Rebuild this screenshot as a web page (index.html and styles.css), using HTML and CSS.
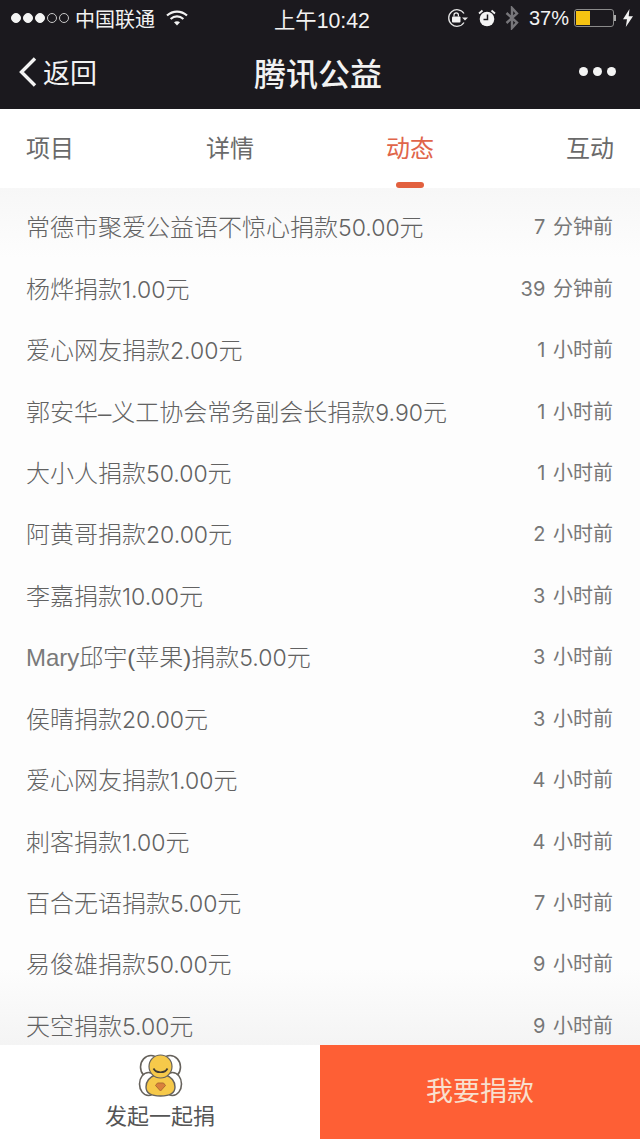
FILE: index.html
```html
<!DOCTYPE html>
<html>
<head>
  <title>腾讯公益</title>
  <link rel="stylesheet" href="styles.css">
</head>
<body>
  <div class="page">
    <div class="top">
      <div class="status">
        <div class="status-left">
          <span class="signal">
            <i class="dot on"></i><i class="dot on"></i><i class="dot on"></i><i class="dot"></i><i class="dot"></i>
          </span>
          <span class="carrier">中国联通</span>
          <svg class="wifi" width="22" height="16" viewBox="0 0 22 16">
            <path d="M1 5.500C6.800 .2 15.200 .2 21 5.500" fill="none" stroke="#f2f2f2" stroke-width="2.200"/>
            <path d="M4.600 9C8.400 5.600 13.600 5.600 17.400 9" fill="none" stroke="#f2f2f2" stroke-width="2.200"/>
            <path d="M8 12.300C9.800 10.800 12.200 10.800 14 12.300L11 15.600Z" fill="#f2f2f2"/>
          </svg>
        </div>
        <div class="clock">上午10:42</div>
        <div class="status-right">
          <svg width="21" height="20" viewBox="0 0 21 20">
            <path d="M17 14.500A8.300 8.300 0 1 1 17 5.500" fill="none" stroke="#e6e6e6" stroke-width="1.300"/>
            <path d="M15 9.500H21L18 12.500Z" fill="#e6e6e6"/>
            <rect x="5" y="8.500" width="8.500" height="6" rx="1" fill="#f2f2f2"/>
            <path d="M7 8.500V7a2.200 2.200 0 0 1 4.400 0V8.500" fill="none" stroke="#f2f2f2" stroke-width="1.200"/>
          </svg>
          <svg class="alarm" width="18" height="18" viewBox="0 0 18 18">
            <circle cx="9" cy="10" r="7.300" fill="#f4f4f4"/>
            <path d="M9.500 5.500V10.500H5.500" fill="none" stroke="#1b191e" stroke-width="1.500"/>
            <path d="M1 4.500L4.500 1.500M17 4.500L13.500 1.500" stroke="#f4f4f4" stroke-width="1.800"/>
          </svg>
          <svg class="bt" width="14" height="24" viewBox="0 0 14 24">
            <path d="M1.500 7L12 16.500L7 22V2L12 7.500L1.500 17" fill="none" stroke="#77767a" stroke-width="2.400"/>
          </svg>
          <span class="percent">37%</span>
          <span class="battery"><span class="battery-level"></span></span>
          <span class="battery-cap"></span>
          <svg class="bolt" width="10" height="18" viewBox="0 0 10 18">
            <path d="M6.500 0L0 10.200H4L2.800 18L10 7.300H5.700Z" fill="#f2f2f2"/>
          </svg>
        </div>
      </div>
      <div class="nav">
        <div class="back">
          <svg width="20" height="32" viewBox="0 0 20 32">
            <path d="M17 2.500L3.500 16L17 29.500" fill="none" stroke="#f2f2f2" stroke-width="3.400"/>
          </svg>
          <span>返回</span>
        </div>
        <div class="title">腾讯公益</div>
        <div class="more"><i></i><i></i><i></i></div>
      </div>
    </div>

    <div class="tabs">
      <div class="tab">项目</div>
      <div class="tab">详情</div>
      <div class="tab active">动态</div>
      <div class="tab">互动</div>
    </div>

    <div class="list">
      <div class="row"><span>常德市聚爱公益语不惊心捐款<span class="num">50.00</span>元</span><span class="time">7 分钟前</span></div>
      <div class="row"><span>杨烨捐款<span class="num">1.00</span>元</span><span class="time">39 分钟前</span></div>
      <div class="row"><span>爱心网友捐款<span class="num">2.00</span>元</span><span class="time">1 小时前</span></div>
      <div class="row"><span>郭安华–义工协会常务副会长捐款<span class="num">9.90</span>元</span><span class="time">1 小时前</span></div>
      <div class="row"><span>大小人捐款<span class="num">50.00</span>元</span><span class="time">1 小时前</span></div>
      <div class="row"><span>阿黄哥捐款<span class="num">20.00</span>元</span><span class="time">2 小时前</span></div>
      <div class="row"><span>李嘉捐款<span class="num">10.00</span>元</span><span class="time">3 小时前</span></div>
      <div class="row"><span><span class="latin">Mary</span>邱宇(苹果)捐款<span class="num">5.00</span>元</span><span class="time">3 小时前</span></div>
      <div class="row"><span>侯晴捐款<span class="num">20.00</span>元</span><span class="time">3 小时前</span></div>
      <div class="row"><span>爱心网友捐款<span class="num">1.00</span>元</span><span class="time">4 小时前</span></div>
      <div class="row"><span>刺客捐款<span class="num">1.00</span>元</span><span class="time">4 小时前</span></div>
      <div class="row"><span>百合无语捐款<span class="num">5.00</span>元</span><span class="time">7 小时前</span></div>
      <div class="row"><span>易俊雄捐款<span class="num">50.00</span>元</span><span class="time">9 小时前</span></div>
      <div class="row"><span>天空捐款<span class="num">5.00</span>元</span><span class="time">9 小时前</span></div>
    </div>

    <div class="bottom">
      <div class="together">
        <svg width="46" height="44" viewBox="0 0 46 44">
          <ellipse cx="14" cy="13" rx="10.500" ry="11.500" fill="#fff" stroke="#66625c" stroke-width="1.600"/>
          <ellipse cx="33" cy="13" rx="10.500" ry="11.500" fill="#fff" stroke="#66625c" stroke-width="1.600"/>
          <ellipse cx="11.500" cy="30" rx="9" ry="11.500" fill="#fff" stroke="#66625c" stroke-width="1.600"/>
          <ellipse cx="35.500" cy="30" rx="9" ry="11.500" fill="#fff" stroke="#66625c" stroke-width="1.600"/>
          <path d="M23.500 42C13 42 9 39 9 33C9 27 13 23 18 21H29C34 23 38 27 38 33C38 39 34 42 23.500 42Z" fill="#f6c94a" stroke="#66625c" stroke-width="1.400"/>
          <ellipse cx="23.500" cy="12.500" rx="11.500" ry="11.500" fill="#f6c94a" stroke="#66625c" stroke-width="1.200"/>
          <path d="M16.500 14.500C19 19.500 28 19.500 30.500 14.500" fill="none" stroke="#3f3a32" stroke-width="1.700"/>
          <path d="M18.500 31.500L20.500 29H26.500L28.500 31.500L23.500 37Z" fill="#d9803c" stroke="#ad6a32" stroke-width="1"/>
        </svg>
        <span>发起一起捐</span>
      </div>
      <div class="donate">我要捐款</div>
    </div>
  </div>
</body>
</html>
```

FILE: styles.css
```css
body {
  margin: 0;
  font-family: "Liberation Sans", "Noto Sans CJK SC", sans-serif;
  background-color: #fff;
}
.page {
  width: 640px;
  height: 1139px;
  display: flex;
  flex-direction: column;
  overflow: hidden;
}
.top {
  height: 109px;
  flex: none;
  background-color: #1b191e;
  color: #f2f2f2;
}
.status {
  height: 36px;
  padding: 0 7px 0 11px;
  display: grid;
  grid-template-columns: 1fr auto 1fr;
  align-items: center;
  font-size: 20px;
}
.status-left {
  display: flex;
  align-items: center;
}
.signal {
  display: flex;
  gap: 2px;
}
.dot {
  width: 10px;
  height: 10px;
  border: 1px solid #c8c8c8;
  border-radius: 50%;
  box-sizing: border-box;
}
.dot.on {
  background-color: #f4f4f4;
  border-color: #f4f4f4;
}
.carrier {
  margin-left: 6px;
}
.wifi {
  margin-left: 11px;
}
.clock {
  font-size: 21.300px;
}
.status-right {
  display: flex;
  align-items: center;
  justify-content: flex-end;
}
.alarm {
  margin-left: 10px;
}
.bt {
  margin-left: 9px;
}
.percent {
  margin-left: 10px;
}
.battery {
  margin-left: 5px;
  width: 38px;
  height: 16px;
  border: 1px solid #8a8a8a;
  border-radius: 3px;
  display: block;
}
.battery-level {
  display: block;
  width: 14px;
  height: 14px;
  margin: 1px;
  background-color: #f6c312;
}
.battery-cap {
  width: 2px;
  height: 6px;
  background-color: #aaa;
}
.bolt {
  margin-left: 7px;
}
.nav {
  height: 73px;
  padding: 0 24px 2px 20px;
  box-sizing: border-box;
  display: grid;
  grid-template-columns: 1fr auto 1fr;
  align-items: center;
}
.back {
  display: flex;
  align-items: center;
  gap: 5px;
  margin-left: -2px;
  font-size: 27px;
}
.title {
  font-size: 32px;
  font-weight: 500;
}
.more {
  display: flex;
  justify-content: flex-end;
  gap: 5px;
}
.more i {
  width: 9px;
  height: 9px;
  border-radius: 50%;
  background-color: #f4f4f4;
}
.tabs {
  height: 79px;
  flex: none;
  padding: 0 26px;
  display: flex;
  justify-content: space-between;
  background-color: #fff;
}
.tab {
  position: relative;
  font-size: 24px;
  line-height: 80px;
  color: #6a6a6a;
}
.tab.active {
  color: #e0654a;
}
.tab.active::after {
  content: "";
  position: absolute;
  left: 10px;
  right: 10px;
  bottom: 0;
  height: 6px;
  border-radius: 3px;
  background-color: #e2603e;
}
.list {
  flex: 1;
  overflow: hidden;
  padding: 7px 27px 0 26px;
  background: linear-gradient(#f7f7f7, #fdfdfd 70px, #fdfdfd 780px, #f4f4f4);
  color: #626262;
  font-weight: 300;
}
.row {
  height: 61.450px;
  display: flex;
  justify-content: space-between;
  align-items: center;
  font-size: 24px;
}
.num {
  font-family: Inter, sans-serif;
  font-size: 23px;
}
.latin {
  color: #7a7a7a;
}
.time {
  font-family: Inter, "Noto Sans CJK SC", sans-serif;
  font-size: 20px;
  font-weight: 400;
  word-spacing: 2px;
  color: #777;
}
.bottom {
  height: 94px;
  flex: none;
  display: flex;
}
.together {
  width: 320px;
  background-color: #fff;
  color: #555;
  display: flex;
  flex-direction: column;
  align-items: center;
  justify-content: flex-end;
  padding-bottom: 9px;
  box-sizing: border-box;
  font-size: 22px;
}
.donate {
  width: 320px;
  background-color: #fe5f35;
  color: #f8e0cf;
  font-size: 27px;
  text-align: center;
  line-height: 95px;
}
```
